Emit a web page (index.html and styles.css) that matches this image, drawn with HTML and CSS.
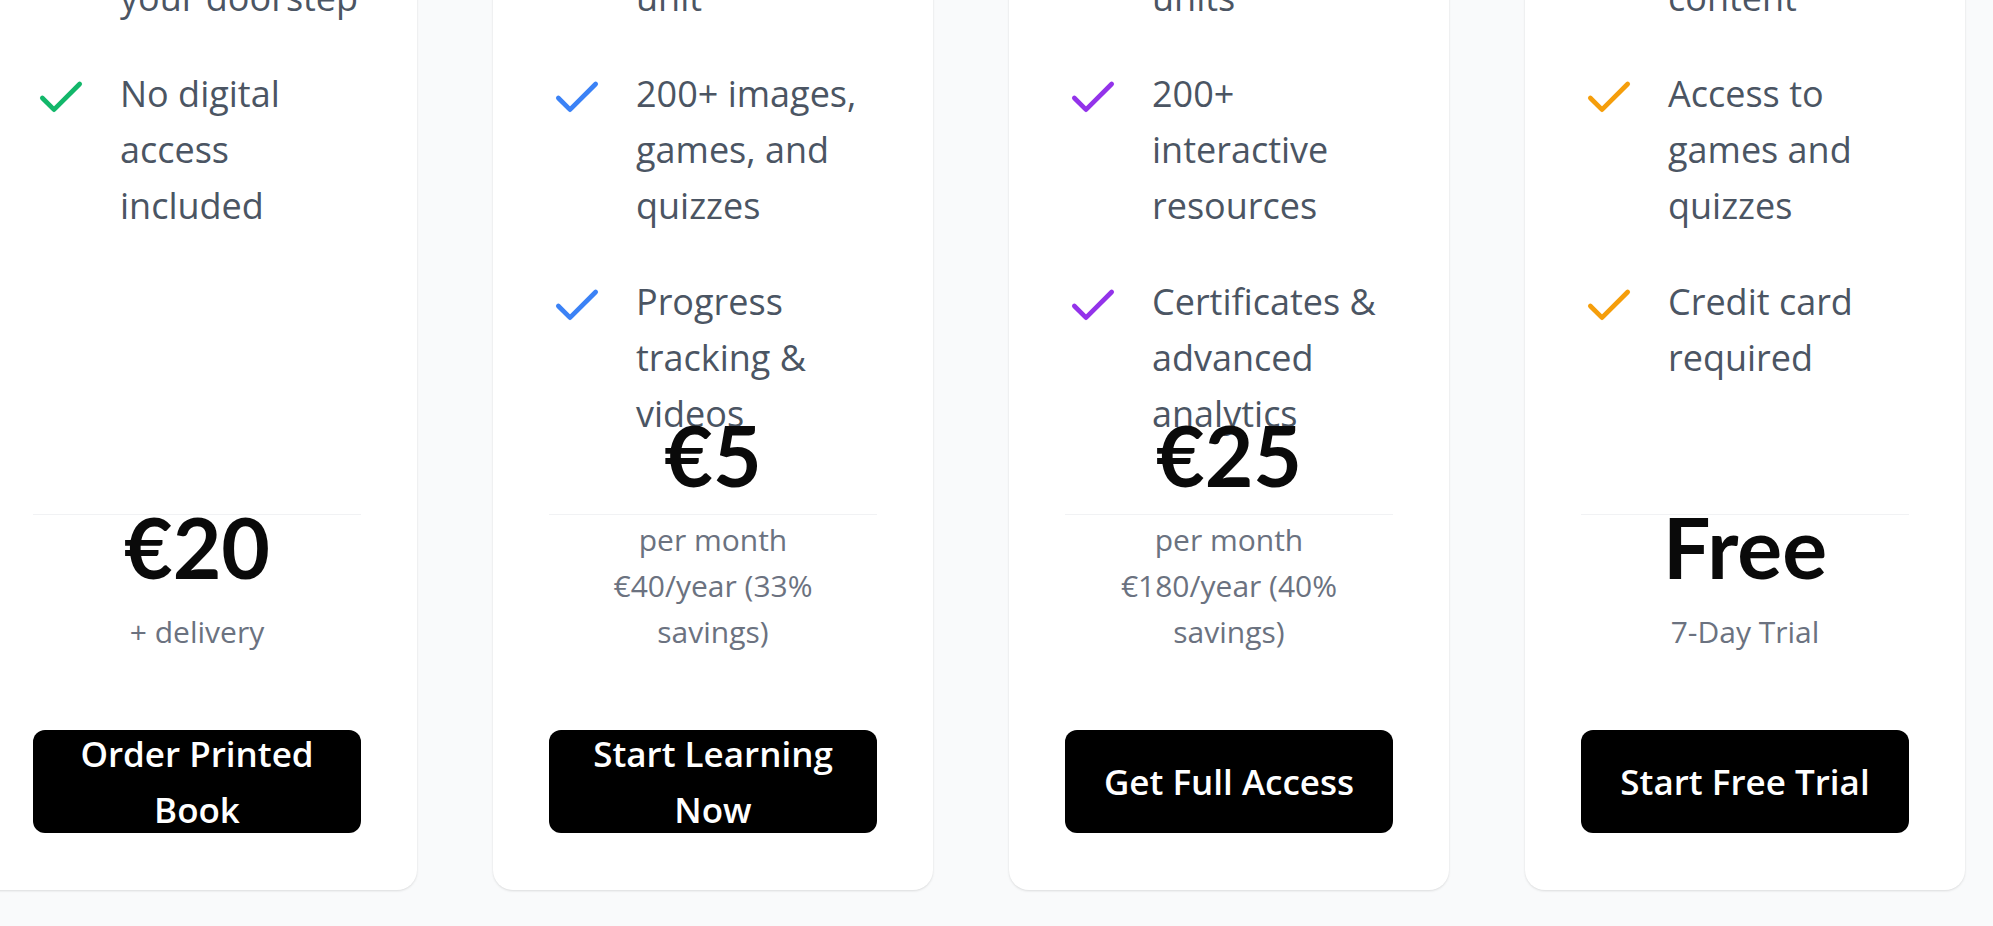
FILE: index.html
```html
<!DOCTYPE html>
<html lang="en">
<head>
<meta charset="utf-8">
<title>Pricing plans</title>
<link rel="stylesheet" href="styles.css">
</head>
<body>
<main class="page">
  <section class="plans">
    <article class="plan plan-green">
      <h3 class="plan-name">Printed Book</h3>
      <ul class="features">
        <li><svg class="check" viewBox="0 0 24 24"><path d="M20 6 9 17l-5-5"/></svg><span>Full-color textbook</span></li>
        <li><svg class="check" viewBox="0 0 24 24"><path d="M20 6 9 17l-5-5"/></svg><span>Shipped to your doorstep</span></li>
        <li><svg class="check" viewBox="0 0 24 24"><path d="M20 6 9 17l-5-5"/></svg><span>No digital access included</span></li>
      </ul>
      <div class="price-box">
        <div class="price">€20</div>
        <div class="price-note">+ delivery</div>
      </div>
      <a class="cta" href="#">Order Printed Book</a>
    </article>

    <article class="plan plan-blue">
      <h3 class="plan-name">Single Unit</h3>
      <ul class="features">
        <li><svg class="check" viewBox="0 0 24 24"><path d="M20 6 9 17l-5-5"/></svg><span>Digital textbook</span></li>
        <li><svg class="check" viewBox="0 0 24 24"><path d="M20 6 9 17l-5-5"/></svg><span>Access to one unit</span></li>
        <li><svg class="check" viewBox="0 0 24 24"><path d="M20 6 9 17l-5-5"/></svg><span>200+ images, games, and quizzes</span></li>
        <li><svg class="check" viewBox="0 0 24 24"><path d="M20 6 9 17l-5-5"/></svg><span>Progress tracking &amp; videos</span></li>
      </ul>
      <div class="price-box">
        <div class="price">€5</div>
        <div class="price-note">per month</div>
        <div class="price-note">€40/year (33% savings)</div>
      </div>
      <a class="cta" href="#">Start Learning Now</a>
    </article>

    <article class="plan plan-purple">
      <h3 class="plan-name">Full Access</h3>
      <ul class="features">
        <li><svg class="check" viewBox="0 0 24 24"><path d="M20 6 9 17l-5-5"/></svg><span>Digital textbook</span></li>
        <li><svg class="check" viewBox="0 0 24 24"><path d="M20 6 9 17l-5-5"/></svg><span>Access to all units</span></li>
        <li><svg class="check" viewBox="0 0 24 24"><path d="M20 6 9 17l-5-5"/></svg><span>200+ interactive resources</span></li>
        <li><svg class="check" viewBox="0 0 24 24"><path d="M20 6 9 17l-5-5"/></svg><span>Certificates &amp; advanced analytics</span></li>
      </ul>
      <div class="price-box">
        <div class="price">€25</div>
        <div class="price-note">per month</div>
        <div class="price-note">€180/year (40% savings)</div>
      </div>
      <a class="cta" href="#">Get Full Access</a>
    </article>

    <article class="plan plan-orange">
      <h3 class="plan-name">Free Trial</h3>
      <ul class="features">
        <li><svg class="check" viewBox="0 0 24 24"><path d="M20 6 9 17l-5-5"/></svg><span>Digital preview</span></li>
        <li><svg class="check" viewBox="0 0 24 24"><path d="M20 6 9 17l-5-5"/></svg><span>Free sample content</span></li>
        <li><svg class="check" viewBox="0 0 24 24"><path d="M20 6 9 17l-5-5"/></svg><span>Access to games and quizzes</span></li>
        <li><svg class="check" viewBox="0 0 24 24"><path d="M20 6 9 17l-5-5"/></svg><span>Credit card required</span></li>
      </ul>
      <div class="price-box">
        <div class="price">Free</div>
        <div class="price-note">7-Day Trial</div>
      </div>
      <a class="cta" href="#">Start Free Trial</a>
    </article>
  </section>
</main>
</body>
</html>
```

FILE: styles.css
```css
* {
  box-sizing: border-box;
}

html, body {
  margin: 0;
  padding: 0;
}

body {
  height: 100vh;
  overflow: hidden;
  background: #f9fafb;
  font-family: "Open Sans", "Noto Sans", sans-serif;
  display: flex;
  flex-direction: column;
  justify-content: flex-end;
}

.page {
  flex-shrink: 0;
  padding-bottom: 36px;
}

.plans {
  display: flex;
  justify-content: flex-end;
  align-items: stretch;
  gap: 76px;
  padding-right: 28px;
}

.plan {
  --accent: #12b76a;
  flex: 0 0 440px;
  width: 440px;
  background: #ffffff;
  border-radius: 20px;
  box-shadow: 0 1px 3px rgba(0, 0, 0, 0.08), 0 1px 2px rgba(0, 0, 0, 0.05);
  padding: 56px 56px 57px;
  display: flex;
  flex-direction: column;
}

.plan-green { --accent: #12b76a; }
.plan-blue { --accent: #3b82f6; }
.plan-purple { --accent: #9333ea; }
.plan-orange { --accent: #f59e0b; }

.plan-name {
  margin: 0 0 40px;
  font-size: 40px;
  line-height: 56px;
  font-weight: 700;
  color: #111827;
  text-align: center;
}

.features {
  list-style: none;
  margin: 0 0 72px;
  padding: 0;
  flex: 1;
  display: flex;
  flex-direction: column;
  gap: 40px;
}

.features li {
  display: flex;
  align-items: flex-start;
  font-size: 36px;
  line-height: 56px;
  color: #4b5563;
}

.check {
  flex: 0 0 56px;
  width: 56px;
  height: 56px;
  margin-top: 4px;
  margin-right: 31px;
  fill: none;
  stroke: var(--accent);
  stroke-width: 2;
  stroke-linecap: round;
  stroke-linejoin: round;
}

.price-box {
  height: 141px;
  padding: 0 12px;
  border-top: 1px solid #f1f2f4;
  display: flex;
  flex-direction: column;
  justify-content: flex-end;
  text-align: center;
}

.price {
  font-family: "Lato", "Open Sans", sans-serif;
  font-size: 84px;
  line-height: 84px;
  font-weight: 700;
  color: #0a0a0a;
  margin-bottom: 20px;
}

.price-note {
  font-size: 30px;
  line-height: 46px;
  color: #6b7280;
}

.cta {
  margin-top: 75px;
  height: 103px;
  padding: 0 24px;
  background: #000000;
  color: #ffffff;
  border-radius: 12px;
  display: flex;
  align-items: center;
  justify-content: center;
  text-align: center;
  text-decoration: none;
  font-size: 35px;
  line-height: 56px;
  font-weight: 600;
}
```
